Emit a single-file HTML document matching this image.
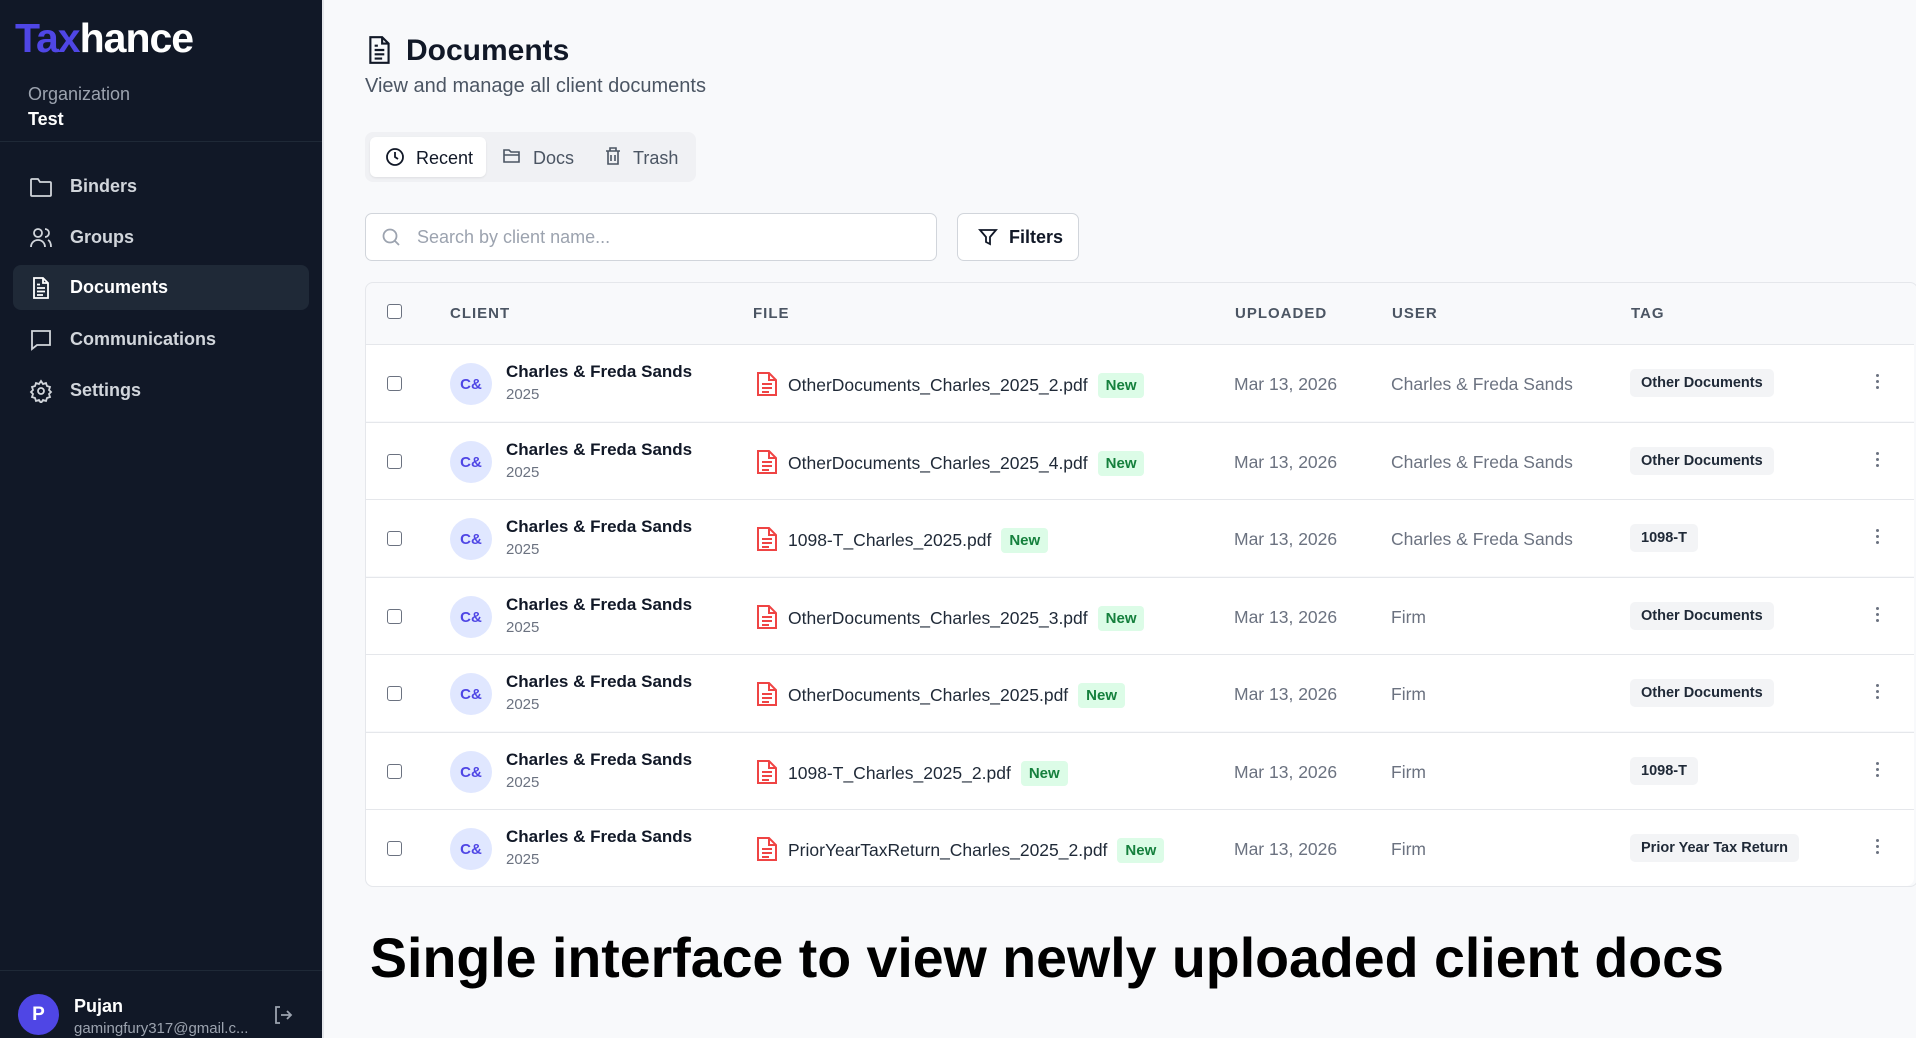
<!DOCTYPE html>
<html><head><meta charset="utf-8"><style>
*{box-sizing:border-box;margin:0;padding:0}
body{width:1916px;height:1038px;overflow:hidden;background:#f8f9fb;font-family:"Liberation Sans",sans-serif;position:relative}
.sb{position:absolute;left:0;top:0;width:324px;height:1038px;background:#111827;border-right:2px solid #e5e7eb}
.logo{position:absolute;left:15px;top:15px;font-size:41px;font-weight:bold;letter-spacing:-1px;color:#fff}
.logo span{color:#4f46e5}
.org{position:absolute;left:28px;top:84px;color:#9ca3af;font-size:18px}
.test{position:absolute;left:28px;top:109px;color:#fff;font-size:18px;font-weight:bold}
.div{position:absolute;left:0;width:322px;height:1px;background:#1f2937}
.nav{position:absolute;left:13px;width:296px;height:45px;border-radius:8px;color:#d1d5db;font-size:18px;font-weight:bold;display:flex;align-items:center;padding-left:16px}
.nav svg{margin-right:17px}
.nav.act{background:#1f2937;color:#fff}
.abs{position:absolute}
.th{position:absolute;top:305px;font-size:15px;color:#4b5563;letter-spacing:1px;font-weight:bold}
.row{position:absolute;left:366px;width:1548px;height:77px;border-top:1px solid #e5e7eb;background:#fff}
.cb{position:absolute;width:15px;height:15px;border:1.5px solid #6b7280;border-radius:3px;background:#fff}
.av{position:absolute;left:84px;top:18px;width:42px;height:42px;border-radius:50%;background:#e0e7ff;color:#4f46e5;font-size:15px;font-weight:bold;display:flex;align-items:center;justify-content:center}
.nm{position:absolute;left:140px;top:17px;font-size:17px;font-weight:bold;color:#111827}
.yr{position:absolute;left:140px;top:41px;font-size:15px;color:#6b7280}
.fi{position:absolute;left:390px;top:26px}
.fn{position:absolute;left:422px;top:28px;font-size:17.5px;color:#1f2937;display:flex;align-items:center}
.new{margin-left:10px;background:#dcfce7;color:#15803d;font-size:15px;font-weight:bold;padding:4px 8px;border-radius:4px}
.dt{position:absolute;left:868px;top:29px;font-size:17.5px;color:#6b7280}
.us{position:absolute;left:1025px;top:29px;font-size:17.5px;color:#6b7280}
.tag{position:absolute;left:1264px;top:24px;background:#f3f4f6;color:#1f2937;font-size:14.5px;font-weight:bold;padding:6px 11px;border-radius:5px}
.dots{position:absolute;left:1510px;top:29px;width:4px}
.dots i{display:block;width:3px;height:3px;background:#6b7280;border-radius:50%;margin-bottom:3px}
</style></head><body>
<div class="sb">
<div class="logo"><span>Tax</span>hance</div>
<div class="org">Organization</div>
<div class="test">Test</div>
<div class="div" style="top:141px"></div>
<div class="nav" style="top:164px"><svg width="24" height="22" viewBox="0 0 24 22" fill="none" stroke="#d1d5db" stroke-width="1.8"><path d="M2 4a1 1 0 0 1 1-1h6l2 3h10a1 1 0 0 1 1 1v12a1 1 0 0 1-1 1H3a1 1 0 0 1-1-1z"/></svg>Binders</div>
<div class="nav" style="top:215px"><svg width="24" height="22" viewBox="0 0 24 22" fill="none" stroke="#d1d5db" stroke-width="1.8"><circle cx="9" cy="6" r="4"/><path d="M2 20c0-4 3-7 7-7s7 3 7 7M16 2a4 4 0 0 1 0 8M19 13c2 1 3 4 3 7"/></svg>Groups</div>
<div class="nav act" style="top:265px"><svg width="24" height="24" viewBox="0 0 24 24" fill="none" stroke="#fff" stroke-width="1.8"><path d="M5 2h9l5 5v15H5z M14 2v5h5 M8 12h8 M8 15.5h8 M8 19h6 M8 8.5h3"/></svg>Documents</div>
<div class="nav" style="top:317px"><svg width="24" height="24" viewBox="0 0 24 24" fill="none" stroke="#d1d5db" stroke-width="1.8"><path d="M3 3h18v14H8l-5 4z"/></svg>Communications</div>
<div class="nav" style="top:368px"><svg width="24" height="24" viewBox="0 0 24 24" fill="none" stroke="#d1d5db" stroke-width="1.8"><circle cx="12" cy="12" r="3"/><path d="M12 2l2 3 3-1 1 3 3 1-1 3 2 2-2 2 1 3-3 1-1 3-3-1-2 3-2-3-3 1-1-3-3-1 1-3-2-2 2-2-1-3 3-1 1-3 3 1z"/></svg>Settings</div>
<div class="div" style="top:970px"></div>
<div class="abs" style="left:18px;top:994px;width:41px;height:41px;border-radius:50%;background:#4f46e5;color:#fff;font-weight:bold;font-size:19px;display:flex;align-items:center;justify-content:center">P</div>
<div class="abs" style="left:74px;top:996px;color:#fff;font-weight:bold;font-size:18px">Pujan</div>
<div class="abs" style="left:74px;top:1020px;color:#9ca3af;font-size:15px">gamingfury317@gmail.c...</div>
<svg class="abs" style="left:272px;top:1004px" width="22" height="22" viewBox="0 0 22 22" fill="none" stroke="#9ca3af" stroke-width="1.8"><path d="M8 3H4v16h4M9 11h10M15 7l4 4-4 4"/></svg>
</div>

<svg class="abs" style="left:367px;top:35px" width="26" height="30" viewBox="0 0 24 28" fill="none" stroke="#111827" stroke-width="2"><path d="M3 2h11l6 6v18H3z M14 2v6h6 M7 14h9 M7 18h9 M7 22h7 M7 10h3"/></svg>
<div class="abs" style="left:406px;top:34px;font-size:30px;font-weight:bold;color:#111827">Documents</div>
<div class="abs" style="left:365px;top:75px;font-size:20px;color:#4b5563">View and manage all client documents</div>

<div class="abs" style="left:365px;top:132px;width:331px;height:50px;background:#f0f1f4;border-radius:8px"></div>
<div class="abs" style="left:370px;top:137px;width:116px;height:40px;background:#fff;border-radius:6px;box-shadow:0 1px 2px rgba(0,0,0,.08)"></div>
<svg class="abs" style="left:385px;top:147px" width="20" height="20" viewBox="0 0 20 20" fill="none" stroke="#111827" stroke-width="1.8"><circle cx="10" cy="10" r="8"/><path d="M10 5v5l3 2"/></svg>
<div class="abs" style="left:416px;top:148px;font-size:18px;color:#111827">Recent</div>
<svg class="abs" style="left:502px;top:146px" width="20" height="20" viewBox="0 0 20 20" fill="none" stroke="#4b5563" stroke-width="1.6"><path d="M2 4h5l2 2h8v10H2z M2 9h15"/></svg>
<div class="abs" style="left:533px;top:148px;font-size:18px;color:#4b5563">Docs</div>
<svg class="abs" style="left:604px;top:146px" width="18" height="20" viewBox="0 0 18 20" fill="none" stroke="#4b5563" stroke-width="1.6"><path d="M2 5h14M6 5V2h6v3M4 5v13h10V5M7 9v6M11 9v6"/></svg>
<div class="abs" style="left:633px;top:148px;font-size:18px;color:#4b5563">Trash</div>

<div class="abs" style="left:365px;top:213px;width:572px;height:48px;background:#fff;border:1.5px solid #d1d5db;border-radius:7px"></div>
<svg class="abs" style="left:381px;top:227px" width="20" height="20" viewBox="0 0 20 20" fill="none" stroke="#9ca3af" stroke-width="1.8"><circle cx="9" cy="9" r="6.5"/><path d="M14 14l4 4"/></svg>
<div class="abs" style="left:417px;top:227px;font-size:18px;color:#9ca3af">Search by client name...</div>
<div class="abs" style="left:957px;top:213px;width:122px;height:48px;background:#fff;border:1.5px solid #d1d5db;border-radius:7px"></div>
<svg class="abs" style="left:978px;top:227px" width="20" height="20" viewBox="0 0 20 20" fill="none" stroke="#111827" stroke-width="1.8"><path d="M2 3h16l-6 7v7l-4-2v-5z"/></svg>
<div class="abs" style="left:1009px;top:227px;font-size:18px;font-weight:bold;color:#111827">Filters</div>

<div class="abs" style="left:365px;top:282px;width:1553px;height:605px;background:#f8f9fb;border:1.5px solid #e5e7eb;border-radius:8px"></div>
<div class="cb" style="left:387px;top:304px"></div>
<div class="th" style="left:450px">CLIENT</div>
<div class="th" style="left:753px">FILE</div>
<div class="th" style="left:1235px">UPLOADED</div>
<div class="th" style="left:1392px">USER</div>
<div class="th" style="left:1631px">TAG</div>

<div class="row" style="top:344px"><div class="cb" style="left:21px;top:31px"></div><div class="av">C&amp;</div><div class="nm">Charles &amp; Freda Sands</div><div class="yr">2025</div><svg class="fi" width="22" height="26" viewBox="0 0 22 26" fill="none" stroke="#ef4444" stroke-width="2"><path d="M2 2h11l7 7v15H2z M13 2v7h7 M6 13h10 M6 17h10 M6 21h7"/></svg><div class="fn">OtherDocuments_Charles_2025_2.pdf<span class="new">New</span></div><div class="dt">Mar 13, 2026</div><div class="us">Charles &amp; Freda Sands</div><div class="tag">Other Documents</div><div class="dots"><i></i><i></i><i></i></div></div>
<div class="row" style="top:422px"><div class="cb" style="left:21px;top:31px"></div><div class="av">C&amp;</div><div class="nm">Charles &amp; Freda Sands</div><div class="yr">2025</div><svg class="fi" width="22" height="26" viewBox="0 0 22 26" fill="none" stroke="#ef4444" stroke-width="2"><path d="M2 2h11l7 7v15H2z M13 2v7h7 M6 13h10 M6 17h10 M6 21h7"/></svg><div class="fn">OtherDocuments_Charles_2025_4.pdf<span class="new">New</span></div><div class="dt">Mar 13, 2026</div><div class="us">Charles &amp; Freda Sands</div><div class="tag">Other Documents</div><div class="dots"><i></i><i></i><i></i></div></div>
<div class="row" style="top:499px"><div class="cb" style="left:21px;top:31px"></div><div class="av">C&amp;</div><div class="nm">Charles &amp; Freda Sands</div><div class="yr">2025</div><svg class="fi" width="22" height="26" viewBox="0 0 22 26" fill="none" stroke="#ef4444" stroke-width="2"><path d="M2 2h11l7 7v15H2z M13 2v7h7 M6 13h10 M6 17h10 M6 21h7"/></svg><div class="fn">1098-T_Charles_2025.pdf<span class="new">New</span></div><div class="dt">Mar 13, 2026</div><div class="us">Charles &amp; Freda Sands</div><div class="tag">1098-T</div><div class="dots"><i></i><i></i><i></i></div></div>
<div class="row" style="top:577px"><div class="cb" style="left:21px;top:31px"></div><div class="av">C&amp;</div><div class="nm">Charles &amp; Freda Sands</div><div class="yr">2025</div><svg class="fi" width="22" height="26" viewBox="0 0 22 26" fill="none" stroke="#ef4444" stroke-width="2"><path d="M2 2h11l7 7v15H2z M13 2v7h7 M6 13h10 M6 17h10 M6 21h7"/></svg><div class="fn">OtherDocuments_Charles_2025_3.pdf<span class="new">New</span></div><div class="dt">Mar 13, 2026</div><div class="us">Firm</div><div class="tag">Other Documents</div><div class="dots"><i></i><i></i><i></i></div></div>
<div class="row" style="top:654px"><div class="cb" style="left:21px;top:31px"></div><div class="av">C&amp;</div><div class="nm">Charles &amp; Freda Sands</div><div class="yr">2025</div><svg class="fi" width="22" height="26" viewBox="0 0 22 26" fill="none" stroke="#ef4444" stroke-width="2"><path d="M2 2h11l7 7v15H2z M13 2v7h7 M6 13h10 M6 17h10 M6 21h7"/></svg><div class="fn">OtherDocuments_Charles_2025.pdf<span class="new">New</span></div><div class="dt">Mar 13, 2026</div><div class="us">Firm</div><div class="tag">Other Documents</div><div class="dots"><i></i><i></i><i></i></div></div>
<div class="row" style="top:732px"><div class="cb" style="left:21px;top:31px"></div><div class="av">C&amp;</div><div class="nm">Charles &amp; Freda Sands</div><div class="yr">2025</div><svg class="fi" width="22" height="26" viewBox="0 0 22 26" fill="none" stroke="#ef4444" stroke-width="2"><path d="M2 2h11l7 7v15H2z M13 2v7h7 M6 13h10 M6 17h10 M6 21h7"/></svg><div class="fn">1098-T_Charles_2025_2.pdf<span class="new">New</span></div><div class="dt">Mar 13, 2026</div><div class="us">Firm</div><div class="tag">1098-T</div><div class="dots"><i></i><i></i><i></i></div></div>
<div class="row" style="top:809px;border-radius:0 0 8px 8px"><div class="cb" style="left:21px;top:31px"></div><div class="av">C&amp;</div><div class="nm">Charles &amp; Freda Sands</div><div class="yr">2025</div><svg class="fi" width="22" height="26" viewBox="0 0 22 26" fill="none" stroke="#ef4444" stroke-width="2"><path d="M2 2h11l7 7v15H2z M13 2v7h7 M6 13h10 M6 17h10 M6 21h7"/></svg><div class="fn">PriorYearTaxReturn_Charles_2025_2.pdf<span class="new">New</span></div><div class="dt">Mar 13, 2026</div><div class="us">Firm</div><div class="tag">Prior Year Tax Return</div><div class="dots"><i></i><i></i><i></i></div></div>

<div class="abs" style="left:370px;top:926px;font-size:55.5px;font-weight:bold;color:#000;white-space:nowrap">Single interface to view newly uploaded client docs</div>
</body></html>
